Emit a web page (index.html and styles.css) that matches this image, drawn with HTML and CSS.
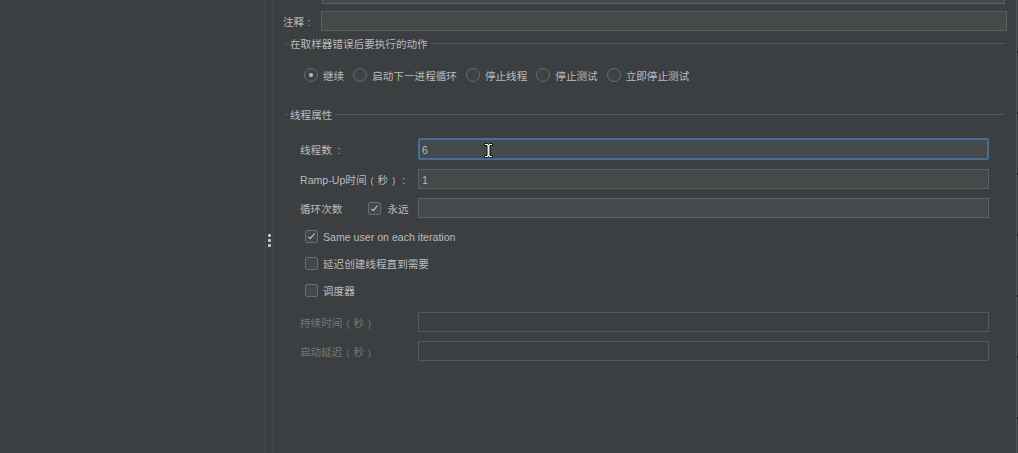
FILE: index.html
```html
<!DOCTYPE html>
<html lang="zh">
<head>
    <meta charset="UTF-8">
    <meta name="viewport" content="width=device-width, initial-scale=1.0">
    <title>线程组</title>
    <link rel="stylesheet" href="styles.css">
</head>
<body>
    <div class="layout">
        <div class="tree-pane"></div>
        <div class="splitter">
            <span class="grip"><i></i><i></i><i></i></span>
        </div>
        <div class="editor">
            <div class="top-field"></div>
            <div class="comment-row">
                <label>注释<span class="colon">:</span></label>
                <div class="input wide"></div>
            </div>

            <div class="group">
                <div class="group-title"><span>在取样器错误后要执行的动作</span></div>
                <div class="radios">
                    <span class="radio checked"></span><span class="rlabel">继续</span>
                    <span class="radio"></span><span class="rlabel">启动下一进程循环</span>
                    <span class="radio"></span><span class="rlabel">停止线程</span>
                    <span class="radio"></span><span class="rlabel">停止测试</span>
                    <span class="radio"></span><span class="rlabel">立即停止测试</span>
                </div>
            </div>

            <div class="group">
                <div class="group-title"><span>线程属性</span></div>
                <div class="props">
                    <div class="row">
                        <label>线程数 <span class="colon">:</span></label>
                        <div class="input focused">6
                            <svg class="ibeam" width="11" height="17" viewBox="0 0 11 17">
                                <path d="M1.5 1.5h3l1 1 1-1h3v2h-2.5v10h2.5v2h-3l-1-1-1 1h-3v-2h2.5v-10h-2.5z" fill="#f2f2f2" stroke="#111" stroke-width="1"/>
                            </svg>
                        </div>
                    </div>
                    <div class="row">
                        <label>Ramp-Up时间<span class="paren">(</span>秒<span class="paren">)</span><span class="colon">:</span></label>
                        <div class="input">1</div>
                    </div>
                    <div class="row">
                        <label class="loop">循环次数 <span class="check checked"></span> 永远</label>
                        <div class="input"></div>
                    </div>
                    <div class="check-row first"><span class="check checked"></span>Same user on each iteration</div>
                    <div class="check-row"><span class="check"></span>延迟创建线程直到需要</div>
                    <div class="check-row last"><span class="check"></span>调度器</div>
                    <div class="row disabled">
                        <label>持续时间<span class="paren">(</span>秒<span class="paren">)</span></label>
                        <div class="input"></div>
                    </div>
                    <div class="row disabled">
                        <label>启动延迟<span class="paren">(</span>秒<span class="paren">)</span></label>
                        <div class="input"></div>
                    </div>
                </div>
            </div>
        </div>
        <div class="edge"></div>
    </div>
</body>
</html>
```

FILE: styles.css
```css
html {
    box-sizing: border-box;
    height: 100%;
}

*,
*::before,
*::after {
    box-sizing: inherit;
    margin: 0;
    padding: 0;
}

body {
    background: #3c3f41;
    color: #bbbbbb;
    font-family: 'Liberation Sans', 'Noto Sans CJK SC', sans-serif;
    font-size: 10.6px;
    height: 100%;
    overflow: hidden;
}

.layout {
    display: flex;
    height: 100%;
}

.tree-pane {
    width: 265px;
    flex-shrink: 0;
}

.splitter {
    width: 9px;
    flex-shrink: 0;
    border-left: 1px solid #4a4d4f;
    border-right: 1px solid #4a4d4f;
    position: relative;
}

.grip {
    position: absolute;
    left: 2px;
    top: 234px;
    display: flex;
    flex-direction: column;
    gap: 2px;
}

.grip i {
    display: block;
    width: 3px;
    height: 3px;
    background: #c8c8c8;
    border-radius: 1px;
}

.editor {
    flex: 1;
    padding-left: 11px;
}

.edge {
    width: 2px;
    border-left: 1px solid #55585a;
    background: repeating-linear-gradient(to bottom, transparent 0, transparent 51px, #1e1f20 51px, #1e1f20 53px, transparent 53px, transparent 61px);
}

.top-field {
    height: 4px;
    margin-left: 37px;
    margin-right: 11px;
    border: 1px solid #5e6060;
    border-top: none;
    background: #45494a;
}

.colon {
    margin-left: 3px;
}

.paren {
    margin: 0 4px;
    font-size: 9px;
}

.input {
    height: 20px;
    background: #45494a;
    border: 1px solid #5e6163;
    color: #bbbbbb;
    padding: 4px 3px 2px;
    line-height: 12px;
    position: relative;
}

.comment-row {
    display: flex;
    align-items: center;
    margin-top: 7px;
    margin-right: 9px;
}

.comment-row label {
    width: 38px;
    margin-left: -2px;
}

.input.wide {
    flex: 1;
}

.group {
    margin-right: 11px;
}

.group-title {
    display: flex;
    align-items: center;
    margin-top: 5px;
    height: 14px;
}

.group-title::before {
    content: "";
    width: 3px;
    border-top: 1px solid #555759;
    margin-right: 2px;
}

.group-title::after {
    content: "";
    flex: 1;
    border-top: 1px solid #555759;
    margin-left: 3px;
}

.radios {
    display: flex;
    align-items: center;
    height: 14px;
    margin: 18px 0 25px 19px;
}

.radio {
    width: 14px;
    height: 14px;
    border: 1px solid #6a6c6d;
    border-radius: 50%;
    margin-right: 5px;
    position: relative;
    background: #3f4244;
}

.radio.checked::after {
    content: "";
    position: absolute;
    left: 4px;
    top: 4px;
    width: 4px;
    height: 4px;
    border-radius: 50%;
    background: #bbbbbb;
}

.rlabel {
    margin-right: 9px;
}

.props {
    padding: 17px 16px 0 15px;
    display: flex;
    flex-direction: column;
}

.row {
    display: grid;
    grid-template-columns: 118px 1fr;
    align-items: center;
    margin-bottom: 9px;
}

.row:first-child .input {
    height: 22px;
}

.input.focused {
    border: 2px solid #466d94;
    border-radius: 2px;
    padding: 4px 2px 2px;
}

.ibeam {
    position: absolute;
    left: 63px;
    top: 2px;
}

.loop {
    display: flex;
    align-items: center;
}

.loop .check {
    margin: 0 6px 0 26px;
}

.check {
    display: inline-block;
    width: 13px;
    height: 13px;
    border: 1px solid #6a6c6d;
    border-radius: 2px;
    background: #43494a;
    position: relative;
    flex-shrink: 0;
}

.check.checked::after {
    content: "";
    position: absolute;
    left: 4px;
    top: 1px;
    width: 3px;
    height: 7px;
    border-right: 1.5px solid #d0d0d0;
    border-bottom: 1.5px solid #d0d0d0;
    transform: rotate(40deg);
}

.check-row {
    display: flex;
    align-items: center;
    gap: 5px;
    padding-left: 5px;
    height: 27px;
}

.check-row.first {
    margin-top: -4px;
}

.check-row.last {
    margin-bottom: 8px;
}

.disabled label {
    color: #777777;
}

.disabled .input {
    background: #3c3f41;
    border-color: #555759;
}
```
